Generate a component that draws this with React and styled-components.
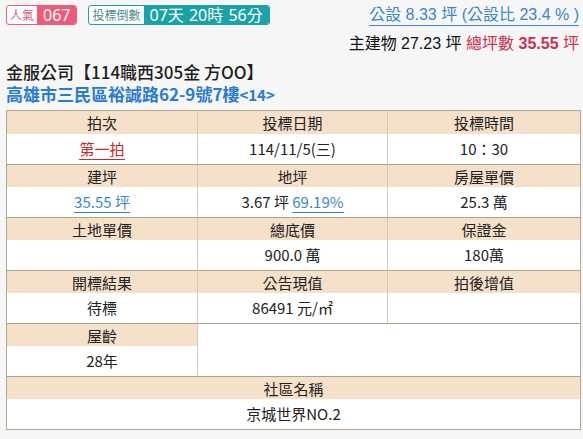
import React from "react";
import styled, { createGlobalStyle } from "styled-components";

const Global = createGlobalStyle`
  html, body { margin: 0; padding: 0; background: #f6f6f6; }
  body { font-family: "Noto Sans", "Noto Sans CJK TC", sans-serif; color: #222; }
`;

const Page = styled.div`
  width: 583px;
  height: 439px;
  box-sizing: border-box;
  padding: 5px 4px 0 6px;
  overflow: hidden;
`;

const Top = styled.div`
  display: flex;
  justify-content: space-between;
  align-items: flex-start;
`;

const Badges = styled.div`
  display: flex;
  gap: 11px;
`;

const Badge = styled.div`
  display: flex;
  height: 20px;
  border: 1px solid ${(p) => p.$c};
  border-radius: 3px;
  box-sizing: border-box;
  overflow: hidden;
  background: #fff;
  line-height: 1;
`;

const BadgeLabel = styled.span`
  display: flex;
  align-items: center;
  padding: 0 3px;
  font-size: 12px;
  color: ${(p) => p.$c};
  font-family: "Noto Sans CJK TC", sans-serif;
`;

const BadgeValue = styled.span`
  display: flex;
  align-items: center;
  padding: 0 6px;
  font-size: 16px;
  color: #fff;
  background: ${(p) => p.$c};
  font-family: "Noto Sans", "Noto Sans CJK TC", sans-serif;
  word-spacing: 1px;
  white-space: nowrap;
`;

const Summary = styled.div`
  text-align: right;
  font-family: "Liberation Sans", "Noto Sans CJK TC", sans-serif;
  font-size: 16px;
  line-height: 20px;
`;

const Shared = styled.div`
  display: inline-block;
  color: #3b86c9;
  border-bottom: 1px solid #3b86c9;
  margin-bottom: 8px;
`;

const Line = styled.div`
  color: #111;
`;

const Total = styled.span`
  color: #cc2f4f;
  font-weight: ${(p) => (p.$bold ? 700 : 400)};
`;

const Title = styled.div`
  margin-top: 7px;
  font-size: 17px;
  line-height: 22px;
  height: 22px;
  font-weight: 500;
  color: #1e1e1e;
  font-family: "Noto Sans CJK TC", sans-serif;
`;

const Address = styled.div`
  font-size: 17px;
  line-height: 22px;
  height: 22px;
  font-weight: 700;
  color: #2a7bd2;
  font-family: "Noto Sans CJK TC", sans-serif;
`;

const Small = styled.span`
  font-size: 15px;
`;

const Table = styled.div`
  margin-top: 5px;
  width: 573px;
  display: grid;
  grid-template-columns: 191px 190px 1fr;
  border: 1px solid #b1aa8e;
  background: #fff;
  font-family: "Noto Sans CJK TC", sans-serif;
  font-size: 15px;
`;

const Cell = styled.div`
  text-align: center;
  box-sizing: border-box;
  grid-column: ${(p) => p.$span || "auto"};
  grid-row: ${(p) => p.$rows || "auto"};
  height: ${(p) => (p.$tall ? "auto" : p.$head ? "23px" : "30px")};
  line-height: ${(p) => (p.$head ? "23px" : "30px")};
  background: ${(p) => (p.$head ? "#f5e0c9" : "#fff")};
  border-right: ${(p) => (p.$last ? "none" : "1px solid #d9c8b2")};
  border-top: ${(p) => (p.$sep ? "1px solid #aaa389" : "none")};
  color: #222;
`;

const Link = styled.span`
  color: ${(p) => (p.$red ? "#c8282d" : "#3a86c9")};
  border-bottom: 1px solid ${(p) => (p.$red ? "#c8282d" : "#3a86c9")};
`;

const rows = [
  [
    ["拍次", "投標日期", "投標時間"],
    [<Link $red>第一拍</Link>, "114/11/5(三)", "10：30"],
  ],
  [
    ["建坪", "地坪", "房屋單價"],
    [<Link>35.55 坪</Link>, <>3.67 坪 <Link>69.19%</Link></>, "25.3 萬"],
  ],
  [
    ["土地單價", "總底價", "保證金"],
    ["", "900.0 萬", "180萬"],
  ],
  [
    ["開標結果", "公告現值", "拍後增值"],
    ["待標", "86491 元/㎡", ""],
  ],
];

export default function App() {
  return (
    <Page>
      <Global />
      <Top>
        <Badges>
          <Badge $c="#ee5a78">
            <BadgeLabel $c="#e0607a">人氣</BadgeLabel>
            <BadgeValue $c="#ee5a78">067</BadgeValue>
          </Badge>
          <Badge $c="#1aa3a6">
            <BadgeLabel $c="#4f8a8c">投標倒數</BadgeLabel>
            <BadgeValue $c="#1aa3a6">07天 20時 56分</BadgeValue>
          </Badge>
        </Badges>
        <Summary>
          <Shared>公設 8.33 坪 (公設比 23.4 % )</Shared>
          <Line>
            主建物 27.23 坪 <Total>總坪數</Total> <Total $bold>35.55</Total>{" "}
            <Total>坪</Total>
          </Line>
        </Summary>
      </Top>
      <Title>金服公司【114職西305金 方OO】</Title>
      <Address>
        高雄市三民區裕誠路62-9號7樓<Small>&lt;14&gt;</Small>
      </Address>
      <Table>
        {rows.map((pair, i) => (
          <React.Fragment key={i}>
            {pair[0].map((t, j) => (
              <Cell key={"h" + j} $head $sep={i > 0} $last={j === 2}>
                {t}
              </Cell>
            ))}
            {pair[1].map((t, j) => (
              <Cell key={"d" + j} $last={j === 2}>
                {t}
              </Cell>
            ))}
          </React.Fragment>
        ))}
        <Cell $head $sep>屋齡</Cell>
        <Cell $span="2 / 4" $rows="9 / 11" $sep $last $tall />
        <Cell>28年</Cell>
        <Cell $head $sep $last $span="1 / 4">社區名稱</Cell>
        <Cell $last $span="1 / 4">京城世界NO.2</Cell>
      </Table>
    </Page>
  );
}
